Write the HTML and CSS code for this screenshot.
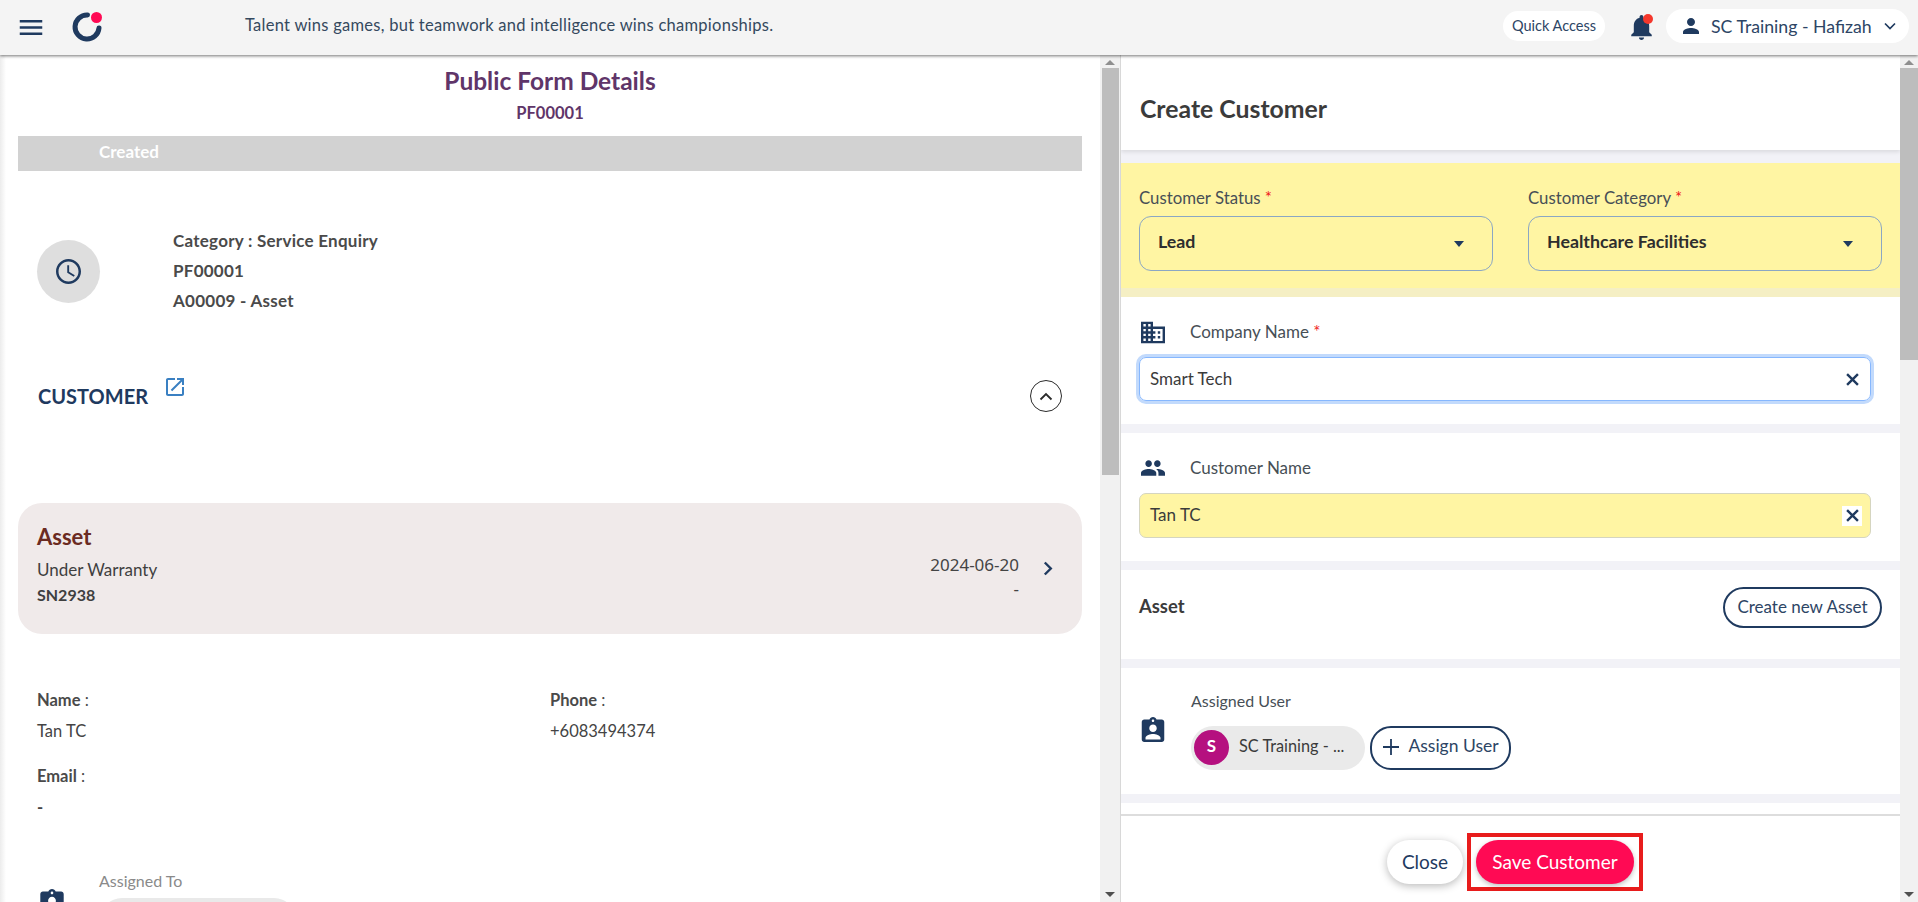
FILE: index.html
```html
<!DOCTYPE html>
<html lang="en">
<head>
<meta charset="utf-8">
<title>Create Customer</title>
<link rel="stylesheet" href="styles.css">
</head>
<body>
<header class="topbar">
  <svg class="menu-icon" viewBox="3 6 18 12"><path d="M3 18h18v-2H3v2zm0-5h18v-2H3v2zm0-7v2h18V6H3z"/></svg>
  <svg class="logo" viewBox="0 0 30 30"><path d="M15.500 3A12 12 0 1 0 27 16" fill="none" stroke="#1f3a5f" stroke-width="5" stroke-linecap="round"/><circle cx="24.500" cy="5.500" r="5.500" fill="#ff0a54"/></svg>
  <p class="quote">Talent wins games, but teamwork and intelligence wins championships.</p>
  <button class="quick">Quick Access</button>
  <div class="bell">
    <svg class="bell-icon" viewBox="4 2.5 16 19.5"><path d="M12 22c1.1 0 2-.9 2-2h-4c0 1.1.89 2 2 2zm6-6v-5c0-3.07-1.64-5.64-4.5-6.32V4c0-.83-.67-1.5-1.5-1.5s-1.5.67-1.5 1.5v.68C7.63 5.36 6 7.92 6 11v5l-2 2v1h16v-1l-2-2z"/></svg>
    <span class="bell-dot"></span>
  </div>
  <div class="user">
    <svg class="user-icon" viewBox="4 4 16 16"><path d="M12 12c2.21 0 4-1.79 4-4s-1.79-4-4-4-4 1.79-4 4 1.79 4 4 4zm0 2c-2.67 0-8 1.34-8 4v2h16v-2c0-2.66-5.33-4-8-4z"/></svg>
    <span class="user-name">SC Training - Hafizah</span>
    <svg class="user-chev" viewBox="0 0 12 8"><path d="M1 1.5l5 5 5-5" fill="none" stroke="#1f3a5f" stroke-width="1.7"/></svg>
  </div>
</header>

<main class="workspace">
  <section class="left">
    <div class="left-scroll">
      <h1 class="form-title">Public Form Details</h1>
      <p class="form-code">PF00001</p>
      <div class="status-bar">Created</div>

      <div class="summary">
        <div class="clock-badge">
          <svg class="clock" viewBox="2 2 20 20"><path d="M11.99 2C6.47 2 2 6.48 2 12s4.47 10 9.99 10C17.52 22 22 17.52 22 12S17.52 2 11.99 2zM12 20c-4.42 0-8-3.58-8-8s3.58-8 8-8 8 3.58 8 8-3.58 8-8 8zm.5-13H11v6l5.25 3.15.75-1.23-4.5-2.67z"/></svg>
        </div>
        <div class="summary-text">
          <div>Category : Service Enquiry</div>
          <div>PF00001</div>
          <div>A00009 - Asset</div>
        </div>
      </div>

      <div class="customer-head">
        <span class="customer-title">CUSTOMER</span>
        <svg class="ext-link" viewBox="3 3 18 18"><path d="M19 19H5V5h7V3H5c-1.11 0-2 .9-2 2v14c0 1.1.89 2 2 2h14c1.1 0 2-.9 2-2v-7h-2v7zM14 3v2h3.59l-9.83 9.83 1.41 1.41L19 6.41V10h2V3h-7z"/></svg>
        <span class="collapse"><svg viewBox="0 0 14 9"><path d="M1.5 7.5L7 2l5.500 5.500" fill="none" stroke="#2b2b2b" stroke-width="1.8"/></svg></span>
      </div>

      <div class="asset-card">
        <div class="asset-info">
          <div class="asset-name">Asset</div>
          <div class="asset-warranty">Under Warranty</div>
          <div class="asset-sn">SN2938</div>
        </div>
        <div class="asset-dates">
          <div>2024-06-20</div>
          <div class="asset-dash">-</div>
        </div>
        <svg class="asset-chev" viewBox="0 0 10 15"><path d="M1.800 1.500l6 6-6 6" fill="none" stroke="#1f3a5f" stroke-width="2.400"/></svg>
      </div>

      <div class="details">
        <div class="detail">
          <div class="detail-label"><b>Name</b> :</div>
          <div class="detail-value">Tan TC</div>
        </div>
        <div class="detail">
          <div class="detail-label"><b>Phone</b> :</div>
          <div class="detail-value">+6083494374</div>
        </div>
        <div class="detail">
          <div class="detail-label"><b>Email</b> :</div>
          <div class="detail-value detail-dash">-</div>
        </div>
      </div>

      <div class="assigned-to">
        <svg class="badge-icon" viewBox="3 1 18 20"><path d="M19 3h-4.180C14.400 1.840 13.300 1 12 1c-1.300 0-2.400.84-2.820 2H5c-1.100 0-2 .9-2 2v14c0 1.100.9 2 2 2h14c1.100 0 2-.9 2-2V5c0-1.100-.9-2-2-2zm-7 0c.55 0 1 .45 1 1s-.45 1-1 1-1-.45-1-1 .45-1 1-1zm0 4c1.660 0 3 1.340 3 3s-1.340 3-3 3-3-1.340-3-3 1.340-3 3-3zm6 12H6v-1.400c0-2 4-3.100 6-3.100s6 1.100 6 3.100V19z"/></svg>
        <div>
          <div class="assigned-label">Assigned To</div>
          <div class="assigned-chip"><span class="assigned-avatar"></span></div>
        </div>
      </div>
    </div>
    <div class="scrollbar">
      <span class="arrow-up"></span>
      <span class="thumb thumb-left"></span>
      <span class="track-rest"></span>
      <span class="arrow-down"></span>
    </div>
  </section>

  <section class="right">
    <div class="right-scroll">
      <div class="panel-head"><h2>Create Customer</h2></div>

      <div class="band-yellow">
        <div class="field">
          <label class="label">Customer Status <i>*</i></label>
          <div class="select"><span>Lead</span><em class="caret"></em></div>
        </div>
        <div class="field">
          <label class="label">Customer Category <i>*</i></label>
          <div class="select"><span>Healthcare Facilities</span><em class="caret"></em></div>
        </div>
      </div>

      <div class="block block-company">
        <div class="block-label">
          <svg class="row-icon" viewBox="2 3 20 18"><path d="M12 7V3H2v18h20V7H12zM6 19H4v-2h2v2zm0-4H4v-2h2v2zm0-4H4V9h2v2zm0-4H4V5h2v2zm4 12H8v-2h2v2zm0-4H8v-2h2v2zm0-4H8V9h2v2zm0-4H8V5h2v2zm10 12h-8v-2h2v-2h-2v-2h2v-2h-2V9h8v10zm-2-8h-2v2h2v-2zm0 4h-2v2h2v-2z"/></svg>
          <span class="label">Company Name <i>*</i></span>
        </div>
        <div class="input input-focus"><span>Smart Tech</span><span class="clear"><svg viewBox="0 0 12 12"><path d="M1 1l10 10M11 1L1 11" stroke="#1f3a5f" stroke-width="2.200"/></svg></span></div>
      </div>

      <div class="block block-customer">
        <div class="block-label">
          <svg class="row-icon people" viewBox="1 5 22 14"><path d="M16 11c1.660 0 2.990-1.340 2.990-3S17.660 5 16 5c-1.660 0-3 1.340-3 3s1.340 3 3 3zm-8 0c1.660 0 2.990-1.340 2.990-3S9.660 5 8 5C6.340 5 5 6.340 5 8s1.340 3 3 3zm0 2c-2.330 0-7 1.170-7 3.500V19h14v-2.500c0-2.330-4.670-3.500-7-3.500zm8 0c-.29 0-.62.020-.97.050 1.160.84 1.970 1.970 1.970 3.450V19h6v-2.500c0-2.330-4.670-3.500-7-3.500z"/></svg>
          <span class="label">Customer Name</span>
        </div>
        <div class="input input-yellow"><span>Tan TC</span><span class="clear clear-white"><svg viewBox="0 0 12 12"><path d="M1 1l10 10M11 1L1 11" stroke="#1f3a5f" stroke-width="2.200"/></svg></span></div>
      </div>

      <div class="block block-asset">
        <span class="asset-label">Asset</span>
        <button class="outline-btn">Create new Asset</button>
      </div>

      <div class="block block-assign">
        <svg class="row-icon badge" viewBox="3 1 18 20"><path d="M19 3h-4.180C14.400 1.840 13.300 1 12 1c-1.300 0-2.400.84-2.820 2H5c-1.100 0-2 .9-2 2v14c0 1.100.9 2 2 2h14c1.100 0 2-.9 2-2V5c0-1.100-.9-2-2-2zm-7 0c.55 0 1 .45 1 1s-.45 1-1 1-1-.45-1-1 .45-1 1-1zm0 4c1.660 0 3 1.340 3 3s-1.340 3-3 3-3-1.340-3-3 1.340-3 3-3zm6 12H6v-1.400c0-2 4-3.100 6-3.100s6 1.100 6 3.100V19z"/></svg>
        <div class="assign-col">
          <div class="label assign-label">Assigned User</div>
          <div class="assign-row">
            <div class="chip"><span class="avatar">S</span><span class="chip-text">SC Training - ...</span></div>
            <button class="outline-btn assign-btn"><svg class="plus" viewBox="0 0 18 18"><path d="M9 1v16M1 9h16" stroke="#1f3a5f" stroke-width="1.800"/></svg><span class="assign-text">Assign User</span></button>
          </div>
        </div>
      </div>

      <div class="spacer"></div>

      <footer class="footer">
        <button class="close-btn">Close</button>
        <div class="highlight"><button class="save-btn">Save Customer</button></div>
      </footer>
    </div>
    <div class="scrollbar">
      <span class="arrow-up"></span>
      <span class="thumb thumb-right"></span>
      <span class="track-rest"></span>
      <span class="arrow-down"></span>
    </div>
  </section>
</main>
</body>
</html>
```

FILE: styles.css
```css
* { box-sizing: border-box; }
html, body { margin: 0; height: 100%; }
body {
  width: 1918px;
  height: 902px;
  overflow: hidden;
  display: flex;
  flex-direction: column;
  font-family: "Lato", "Noto Sans", sans-serif;
  color: #3f3f3f;
  background: #fff;
}
p, h1, h2 { margin: 0; }
button { font-family: inherit; cursor: pointer; }

/* top bar */
.topbar {
  flex: 0 0 55px;
  display: flex;
  align-items: center;
  background: #f4f4f4;
  box-shadow: 0 1px 3px rgba(0,0,0,.55);
  position: relative;
  z-index: 2;
  padding-left: 19px;
}
.menu-icon { width: 24px; height: 15px; fill: #1f3a5f; margin-top: -1px; }
.logo { width: 30px; height: 30px; margin-left: 29px; margin-top: -2px; flex: none; }
.quote {
  width: 1258px;
  margin-left: 143px;
  font-size: 16.500px;
  letter-spacing: .26px;
  color: #34495e;
  margin-top: -5px;
}
.quick {
  width: 102px;
  height: 30px;
  border: 0;
  border-radius: 15px;
  background: #fff;
  font-size: 14.500px;
  color: #2d4565;
  padding: 0 0 2px;
  margin-top: -3px;
}
.bell { position: relative; width: 21px; height: 25px; margin-left: 26px; margin-top: -1px; }
.bell-icon { width: 21px; height: 25px; fill: #1f3a5f; display: block; }
.bell-dot {
  position: absolute; right: -1px; top: -1px;
  width: 10px; height: 10px; border-radius: 50%; background: #f4372c;
}
.user {
  width: 243px;
  height: 34px;
  margin-left: 14px;
  margin-top: -3px;
  display: flex;
  align-items: center;
  background: #fff;
  border-radius: 17px;
  padding-left: 16px;
}
.user-icon { width: 18px; height: 16px; fill: #1f3a5f; }
.user-name { margin-left: 11px; width: 173px; font-size: 17.700px; color: #2d4565; white-space: nowrap; }
.user-chev { width: 12px; height: 8px; }

/* workspace */
.workspace { flex: 1; display: flex; min-height: 0; }
.left { width: 1120px; display: flex; }
.right { width: 798px; display: flex; border-left: 1px solid #d8d8d8; }
.left-scroll {
  width: 1100px;
  height: 847px;
  overflow: hidden;
  padding: 0 18px;
  background: linear-gradient(to right, #ececec, #fff 6px);
}
.scrollbar {
  width: 20px;
  background: #f1f1f1;
  display: flex;
  flex-direction: column;
  align-items: center;
  padding-top: 5px;
}
.right .scrollbar { width: 18px; }
.arrow-up { width: 0; height: 0; border: 5px solid transparent; border-top: 0; border-bottom: 5px solid #8f8f8f; }
.arrow-down { width: 0; height: 0; border: 5px solid transparent; border-bottom: 0; border-top: 5px solid #505050; margin-bottom: 5px; }
.thumb { width: 100%; background: #bdbdbd; margin-top: 3px; }
.left .thumb { width: 17px; }
.thumb-left { height: 407px; }
.thumb-right { height: 292px; }
.track-rest { flex: 1; }

/* left content */
.form-title {
  margin-top: 12px;
  text-align: center;
  font-size: 24.500px;
  line-height: 28px;
  font-weight: 700;
  color: #5f3569;
}
.form-code {
  margin-top: 9px;
  text-align: center;
  font-size: 16.500px;
  line-height: 18px;
  font-weight: 700;
  color: #5f3569;
}
.status-bar {
  margin-top: 14px;
  height: 35px;
  line-height: 32px;
  background: #d2d2d2;
  color: #fff;
  font-size: 17px;
  font-weight: 700;
  padding-left: 81px;
}
.summary { display: flex; margin-top: 55px; padding-left: 19px; align-items: center; }
.clock-badge {
  width: 63px; height: 63px; border-radius: 50%;
  background: #dedede;
  display: flex; align-items: center; justify-content: center;
}
.clock { width: 25px; height: 25px; fill: #1f3a5f; }
.summary-text {
  margin-left: 73px;
  font-size: 17px;
  letter-spacing: .25px;
  line-height: 30px;
  font-weight: 700;
  color: #4a4a4a;
}
.customer-head {
  display: flex;
  align-items: center;
  margin-top: 50px;
  height: 60px;
  padding-left: 20px;
}
.customer-title { font-size: 20px; font-weight: 700; color: #1f3a5f; }
.ext-link { width: 18px; height: 18px; fill: #3a80c2; margin-left: 18px; margin-top: -19px; }
.collapse {
  margin-left: auto;
  margin-right: 20px;
  width: 32px; height: 32px;
  border: 1px solid #2b2b2b;
  border-radius: 50%;
  display: flex; align-items: center; justify-content: center;
}
.collapse svg { width: 14px; height: 9px; }
.asset-card {
  margin-top: 77px;
  height: 131px;
  border-radius: 24px;
  background: #f0eaea;
  display: flex;
  padding: 22px 29px 0 19px;
}
.asset-info { flex: 1; }
.asset-name { font-size: 22px; line-height: 24px; font-weight: 700; color: #6b2b22; }
.asset-warranty { margin-top: 9px; font-size: 17px; line-height: 24px; color: #3f3f3f; }
.asset-sn { font-size: 16px; line-height: 26px; font-weight: 700; color: #3f3f3f; }
.asset-dates {
  margin-top: 28px;
  text-align: right;
  font-family: "Noto Sans", sans-serif;
  font-size: 17px;
  line-height: 24px;
  color: #444;
}
.asset-chev { width: 10px; height: 15px; margin-left: 24px; margin-top: 36px; }
.details {
  margin-top: 54px;
  padding-left: 19px;
  display: grid;
  grid-template-columns: 513px 1fr;
  row-gap: 21px;
}
.detail-label { font-size: 16.500px; line-height: 24px; color: #4a4a4a; }
.detail-value { margin-top: 7px; font-size: 16.500px; line-height: 24px; color: #444; }
.detail-dash { font-weight: 700; }
.assigned-to { display: flex; margin-top: 51px; padding-left: 22px; }
.badge-icon { width: 24px; height: 26px; fill: #1f3a5f; margin-top: 19px; }
.assigned-label { margin-left: 35px; font-size: 16px; line-height: 22px; color: #8a8a8a; }
.assigned-chip { margin-left: 36px; margin-top: 6px; width: 196px; height: 44px; border-radius: 22px; background: #e9e9e9; padding: 4px; }
.assigned-avatar { display: block; width: 35px; height: 35px; border-radius: 50%; background: #b5107f; }

/* right content */
.right-scroll { width: 779px; height: 847px; overflow: hidden; background: #f2f2f7; display: flex; flex-direction: column; }
.panel-head {
  flex: 0 0 95px;
  background: #fff;
  box-shadow: 0 2px 4px rgba(0,0,0,.1);
  display: flex; align-items: center;
  padding: 12px 0 0 19px;
}
.panel-head h2 { font-size: 24.800px; font-weight: 700; color: #3b3b3b; }
.band-yellow {
  flex: 0 0 134px;
  margin-top: 13px;
  background: #fff5a3;
  border-bottom: 9px solid #f5efc4;
  display: grid;
  grid-template-columns: 354px 354px;
  column-gap: 35px;
  padding: 23px 0 0 18px;
}
.label { font-size: 16.800px; line-height: 24px; color: #474f56; font-style: normal; }
.label i { color: #f01e1e; font-style: normal; }
.select {
  margin-top: 6px;
  height: 55px;
  border: 1px solid #8ba7c4;
  border-radius: 12px;
  display: flex;
  align-items: center;
  justify-content: space-between;
  padding: 0 23px 5px 18px;
  font-size: 17.800px;
  font-weight: 700;
  color: #2e2e2e;
}
.caret { width: 0; height: 0; border: 5.500px solid transparent; border-bottom: 0; border-top: 6px solid #1f3a5f; margin-top: 6px; margin-right: 5px; }
.block { background: #fff; margin-bottom: 9px; }
.block-company { flex: 0 0 127px; padding: 23px 29px 0 18px; }
.block-customer { flex: 0 0 128px; padding: 23px 29px 0 18px; }
.block-label { display: flex; align-items: center; height: 24px; }
.row-icon { width: 24px; fill: #1f3a5f; height: 23px; flex: none; margin-left: 2px; }
.people { height: 16px; }
.block-label .label { margin-left: 25px; font-size: 17px; }
.input {
  height: 44px;
  margin-top: 14px;
  border-radius: 7px;
  display: flex;
  align-items: center;
  justify-content: space-between;
  padding: 0 8px 2px 10px;
  font-size: 17px;
  color: #3b3b3b;
}
.input-focus { border: 1px solid #86b7fe; box-shadow: 0 0 0 3px #c2dafc; margin-top: 13px; }
.input-yellow { background: #fff5a3; border: 1px solid #d5d5c0; margin-top: 13px; height: 45px; }
.clear { width: 20px; height: 20px; display: flex; align-items: center; justify-content: center; margin-bottom: -2px; }
.clear svg { width: 13px; height: 13px; }
.clear-white { background: #fff; }
.block-asset { flex: 0 0 89px; display: flex; justify-content: space-between; padding: 17px 18px 0 18px; }
.asset-label { font-size: 18.400px; font-weight: 700; color: #3b3b3b; line-height: 38px; }
.outline-btn {
  height: 41px;
  width: 159px;
  border: 2px solid #1f3a5f;
  border-radius: 21px;
  background: #fff;
  color: #2d4565;
  font-size: 17px;
  padding: 0 0 2px;
}
.block-assign { flex: 0 0 126px; display: flex; align-items: flex-start; padding-left: 18px; }
.badge { height: 25px; width: 24px; margin-top: 49px; }
.assign-col { margin-left: 26px; margin-top: 21px; }
.assign-label { font-size: 16px; }
.assign-row { display: flex; margin-top: 13px; gap: 5px; }
.chip { width: 174px; height: 44px; border-radius: 22px; background: #eaeaea; display: flex; align-items: center; padding-left: 3px; }
.avatar { width: 35px; height: 35px; border-radius: 50%; background: #b5107f; color: #fff; font-size: 17px; font-weight: 700; display: flex; align-items: center; justify-content: center; padding-bottom: 3px; margin-top: -2px; }
.chip-text { margin-left: 10px; font-size: 16.300px; color: #3b3b3b; margin-top: -6px; }
.assign-btn { width: 141px; height: 44px; display: flex; align-items: center; justify-content: center; gap: 8px; }
.plus { width: 18px; height: 18px; }
.assign-text { font-size: 17.500px; margin-top: -3px; white-space: nowrap; }
.spacer { flex: 0 0 11px; background: #fff; margin-top: 0; }
.footer {
  flex: 1;
  background: #fff;
  border-top: 2px solid #ddd;
  display: flex;
  align-items: flex-start;
  padding: 17px 0 0 266px;
  gap: 4px;
}
.close-btn {
  width: 76px; height: 44px;
  margin-top: 7px;
  border: 0;
  border-radius: 22px;
  background: #fff;
  box-shadow: 0 2px 8px rgba(0,0,0,.28);
  color: #1f3a5f;
  font-size: 19px;
  padding: 0 0 2px;
}
.highlight { width: 176px; height: 58px; border: 4px solid #e81c1c; padding: 3px 0 0 5px; }
.save-btn {
  width: 158px; height: 44px;
  border: 0;
  border-radius: 22px;
  background: #ff0a54;
  color: #fff;
  font-size: 19px;
  padding: 0 0 2px;
  box-shadow: 0 2px 5px rgba(0,0,0,.25);
}
```
